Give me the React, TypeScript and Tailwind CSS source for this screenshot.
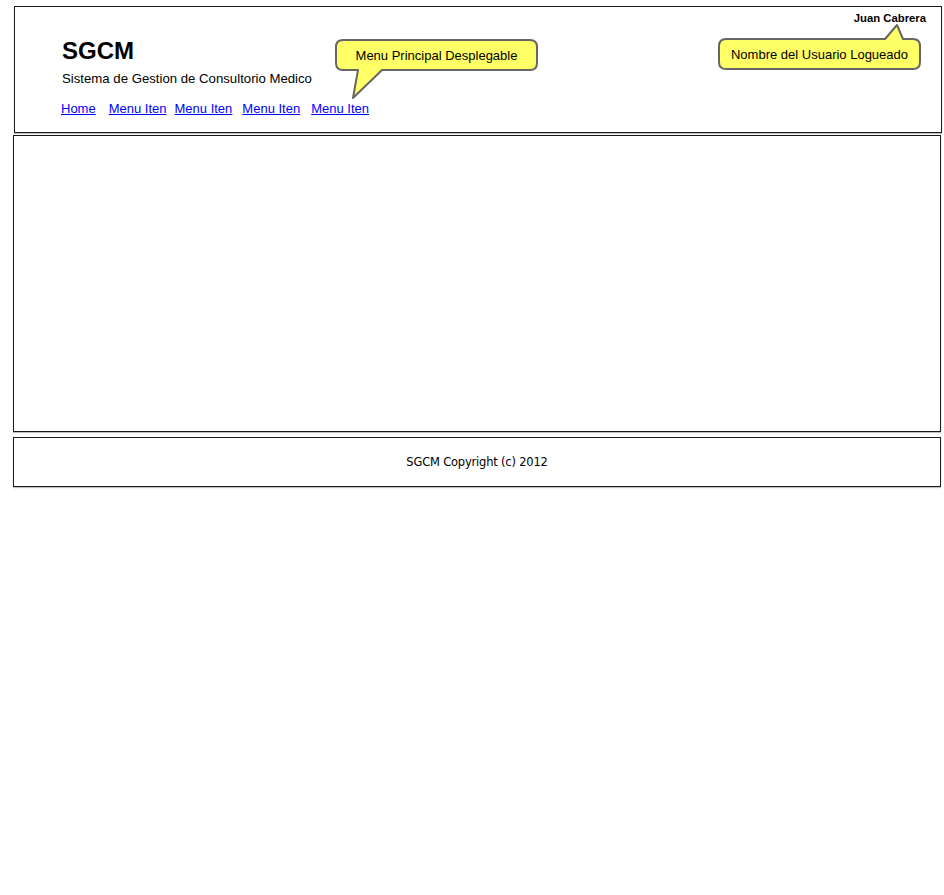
const links = [
  { label: "Home", ml: "ml-0" },
  { label: "Menu Iten", ml: "ml-[13px]" },
  { label: "Menu Iten", ml: "ml-[8px]" },
  { label: "Menu Iten", ml: "ml-[10px]" },
  { label: "Menu Iten", ml: "ml-[11px]" },
];

function Callout({ box, text, path, w, h }: { box: string; text: string; path: string; w: number; h: number }) {
  return (
    <>
      <svg width={w} height={h} className="absolute inset-0">
        <path d={path} fill="#ffff66" stroke="#666666" strokeWidth="2" strokeLinejoin="round" />
      </svg>
      <div className={`absolute ${box} flex h-[30px] w-[201px] items-center justify-center text-[13px] leading-[15px]`}>
        {text}
      </div>
    </>
  );
}

export default function App() {
  return (
    <div className="relative min-h-[895px] w-[944px] bg-white pt-[6px] font-['Liberation_Sans',Arial,sans-serif] text-black">
      {/* ── HEADER ── */}
      <header className="ml-[14px] flex h-[127px] w-[928px] justify-between border border-[#1a1a1a] pl-[47px] pr-[15px] shadow-[0_1px_1px_rgba(0,0,0,0.25)]">
        <div className="pt-[30px]">
          <h1 className="text-[24px] font-bold leading-[28px]">SGCM</h1>
          <p className="mt-[5px] text-[13.2px] leading-[18px]">Sistema de Gestion de Consultorio Medico</p>
          <nav className="-ml-px mt-[13px] flex text-[13px] leading-[16px]">
            {links.map((l, i) => (
              <a key={i} href="#" className={`${l.ml} text-[#0000ff] underline`}>
                {l.label}
              </a>
            ))}
          </nav>
        </div>
        <span className="pt-[5px] text-[11.3px] font-bold leading-[13px]">Juan Cabrera</span>
      </header>

      {/* ── CONTENT ── */}
      <main className="ml-[13px] mt-[2px] h-[297px] w-[928px] border border-[#1a1a1a] shadow-[0_1px_1px_rgba(0,0,0,0.25)]" />

      {/* ── FOOTER ── */}
      <footer className="ml-[13px] mt-[5px] flex h-[50px] w-[928px] items-center justify-center border border-[#1a1a1a] shadow-[0_1px_1px_rgba(0,0,0,0.25)]">
        <span className="pt-[1px] font-['DejaVu_Sans',sans-serif] text-[11.5px] tracking-[-0.2px]">SGCM Copyright (c) 2012</span>
      </footer>

      {/* ── CALLOUT: menu ── */}
      <div className="absolute left-[334px] top-[38px] h-[62px] w-[206px]">
        <Callout
          w={206}
          h={62}
          box="left-[2px] top-[2px]"
          text="Menu Principal Desplegable"
          path="M9 2 H196 Q203 2 203 9 V25 Q203 32 196 32 H48 L19 60 L24 32 H9 Q2 32 2 25 V9 Q2 2 9 2 Z"
        />
      </div>

      {/* ── CALLOUT: user ── */}
      <div className="absolute left-[717px] top-[22px] h-[50px] w-[206px]">
        <Callout
          w={206}
          h={50}
          box="left-[2px] top-[17px]"
          text="Nombre del Usuario Logueado"
          path="M9 17 H168 L180 3 L186 17 H196 Q203 17 203 24 V40 Q203 47 196 47 H9 Q2 47 2 40 V24 Q2 17 9 17 Z"
        />
      </div>
    </div>
  );
}
